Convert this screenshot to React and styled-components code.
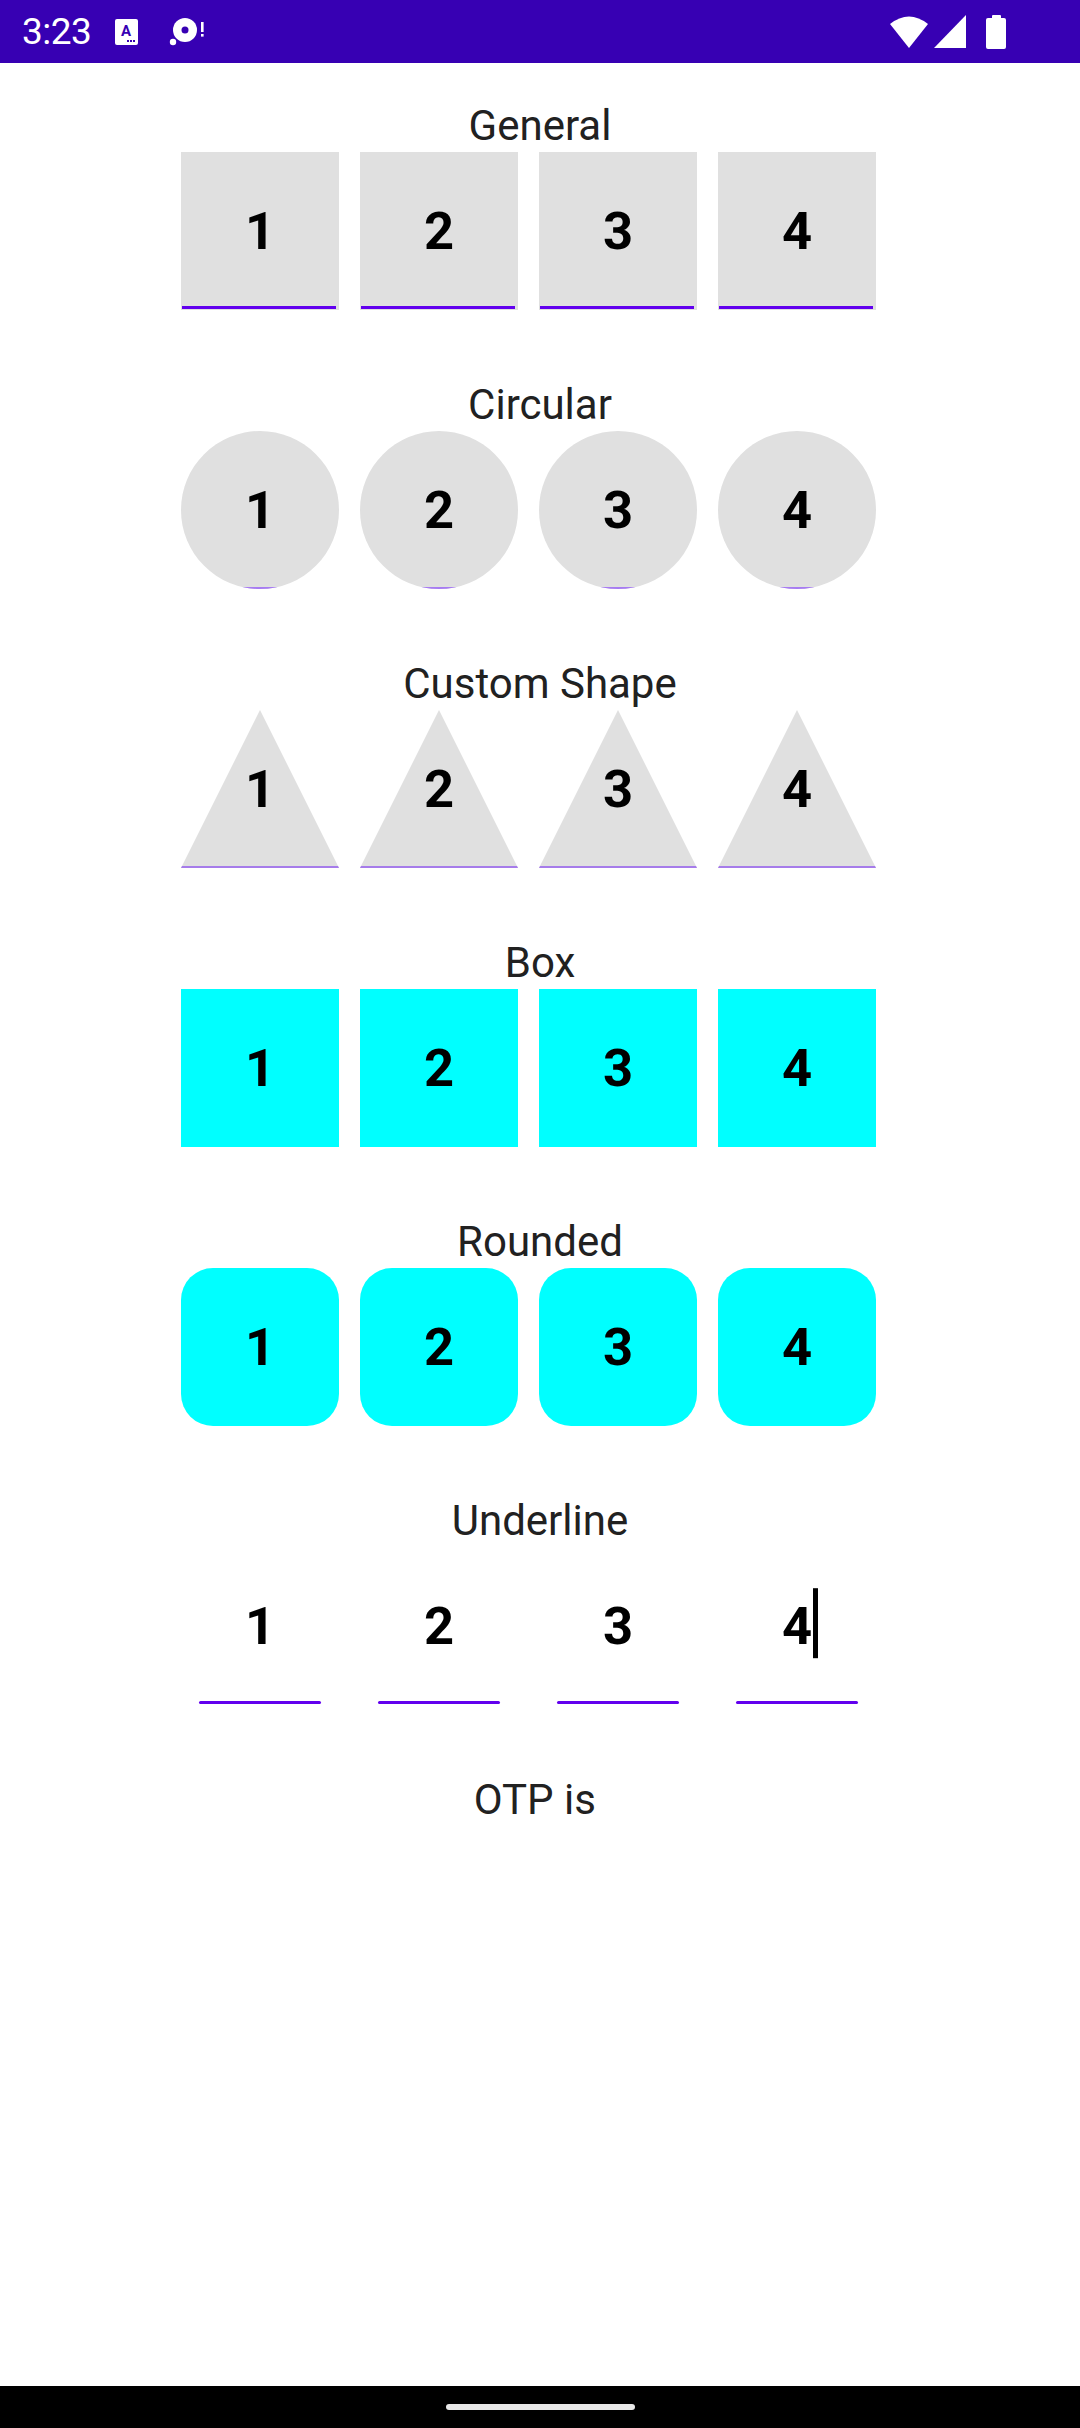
import React from "react";
import styled, { createGlobalStyle, css } from "styled-components";

const GlobalStyle = createGlobalStyle`
  html, body {
    margin: 0;
    padding: 0;
    background: #fff;
  }
  body {
    font-family: Roboto, "Noto Sans", "Liberation Sans", sans-serif;
  }
`;

const Screen = styled.div`
  width: 1080px;
  min-height: 2428px;
  display: flex;
  flex-direction: column;
  background: #fff;
`;

const StatusBar = styled.div`
  height: 63px;
  flex: none;
  background: #3700b3;
  display: flex;
  align-items: center;
  justify-content: space-between;
  padding: 0 74px 0 22px;
  color: #fff;
`;

const StatusLeft = styled.div`
  display: flex;
  align-items: center;
`;

const StatusRight = styled.div`
  display: flex;
  align-items: center;
  gap: 4px;
`;

const Clock = styled.span`
  font-size: 37px;
  letter-spacing: -0.5px;
  margin-right: 24px;
`;

const Content = styled.main`
  flex: 1;
  padding-top: 38px;
  display: flex;
  flex-direction: column;
  align-items: center;
`;

const Section = styled.section`
  width: 100%;
  display: flex;
  flex-direction: column;
  align-items: center;
  margin-bottom: 70px;
`;

const Title = styled.div`
  font-size: 42px;
  line-height: 49px;
  color: #212121;
  margin-bottom: 2px;
  white-space: pre;
`;

const Row = styled.div`
  display: flex;
  justify-content: center;
  padding-right: 2px;
`;

const shapes = {
  general: css`
    background: #e0e0e0;
    &::after {
      left: 1px;
      right: 3px;
      bottom: 1px;
      height: 3px;
      background: #6200ee;
    }
  `,
  circle: css`
    background: #e0e0e0;
    border-radius: 50%;
    overflow: hidden;
    &::after {
      left: 0;
      right: 0;
      bottom: 0;
      height: 2px;
      background: #a77cf2;
    }
  `,
  triangle: css`
    background: #e0e0e0;
    clip-path: polygon(50% 0, 100% 100%, 0 100%);
    &::after {
      left: 0;
      right: 0;
      bottom: 0;
      height: 2px;
      background: #a67cea;
    }
  `,
  box: css`
    background: #00ffff;
  `,
  rounded: css`
    background: #00ffff;
    border-radius: 32px;
  `,
  underline: css`
    &::after {
      left: 18px;
      right: 18px;
      bottom: 1px;
      height: 3px;
      border-radius: 2px;
      background: #6200ee;
    }
  `,
};

const Cell = styled.div`
  position: relative;
  width: 158px;
  height: 158px;
  margin-right: 21px;
  display: flex;
  align-items: center;
  justify-content: center;
  &::after {
    content: "";
    position: absolute;
  }
  ${(p) => shapes[p.$shape]}
`;

const Digit = styled.span`
  position: relative;
  font-size: 52.5px;
  font-weight: 700;
  color: #000;
`;

const Caret = styled.span`
  position: absolute;
  left: 100%;
  top: 50%;
  width: 5px;
  height: 70px;
  margin-left: 1px;
  transform: translateY(-54%);
  background: #000;
`;

const NavBar = styled.div`
  height: 42px;
  flex: none;
  background: #000;
  display: flex;
  align-items: center;
  justify-content: center;
`;

const Handle = styled.div`
  width: 189px;
  height: 6px;
  border-radius: 3px;
  background: #e8e8e8;
`;

const sections = [
  { title: "General", shape: "general" },
  { title: "Circular", shape: "circle" },
  { title: "Custom Shape", shape: "triangle" },
  { title: "Box", shape: "box" },
  { title: "Rounded", shape: "rounded" },
  { title: "Underline", shape: "underline", caret: true },
];

const AccessIcon = () => (
  <svg width="23" height="26" viewBox="0 0 23 26" style={{ marginRight: 30 }}>
    <rect x="0" y="0" width="23" height="26" rx="2" fill="#fff" />
    <text
      x="11"
      y="17"
      fontSize="15"
      fontWeight="700"
      fontFamily="Roboto, sans-serif"
      textAnchor="middle"
      fill="#3700b3"
    >
      A
    </text>
    <rect x="12" y="21" width="2" height="2" fill="#3700b3" />
    <rect x="15" y="21" width="2" height="2" fill="#3700b3" />
    <rect x="18" y="21" width="2" height="2" fill="#3700b3" />
  </svg>
);

const DiscIcon = () => (
  <svg width="40" height="30" viewBox="0 0 40 30">
    <circle cx="17" cy="13" r="12" fill="#fff" />
    <circle cx="17" cy="13" r="3.5" fill="#3700b3" />
    <circle cx="5" cy="25" r="4.5" fill="#3700b3" />
    <circle cx="5" cy="25" r="3.2" fill="#fff" />
    <rect x="33" y="5" width="2.6" height="10" fill="#fff" />
    <rect x="33" y="17" width="2.6" height="2.6" fill="#fff" />
  </svg>
);

const WifiIcon = () => (
  <svg width="40" height="34" viewBox="0 0 40 34">
    <path d="M20 33 L1 9 Q20 -6 39 9 Z" fill="#fff" />
  </svg>
);

const SignalIcon = () => (
  <svg width="34" height="34" viewBox="0 0 34 34" style={{ marginRight: 15 }}>
    <path d="M33 0 L33 33 L1 33 Z" fill="#fff" />
  </svg>
);

const BatteryIcon = () => (
  <svg width="20" height="34" viewBox="0 0 20 34">
    <rect x="6" y="0" width="9" height="4" rx="1" fill="#fff" />
    <rect x="0" y="3" width="20" height="31" rx="2" fill="#fff" />
  </svg>
);

export default function App() {
  return (
    <>
      <GlobalStyle />
      <Screen>
        <StatusBar>
          <StatusLeft>
            <Clock>3:23</Clock>
            <AccessIcon />
            <DiscIcon />
          </StatusLeft>
          <StatusRight>
            <WifiIcon />
            <SignalIcon />
            <BatteryIcon />
          </StatusRight>
        </StatusBar>
        <Content>
          {sections.map((s) => (
            <Section key={s.title}>
              <Title>{s.title}</Title>
              <Row>
                {["1", "2", "3", "4"].map((d, i) => (
                  <Cell key={d} $shape={s.shape}>
                    <Digit>
                      {d}
                      {s.caret && i === 3 && <Caret />}
                    </Digit>
                  </Cell>
                ))}
              </Row>
            </Section>
          ))}
          <Title>{"OTP is "}</Title>
        </Content>
        <NavBar>
          <Handle />
        </NavBar>
      </Screen>
    </>
  );
}
